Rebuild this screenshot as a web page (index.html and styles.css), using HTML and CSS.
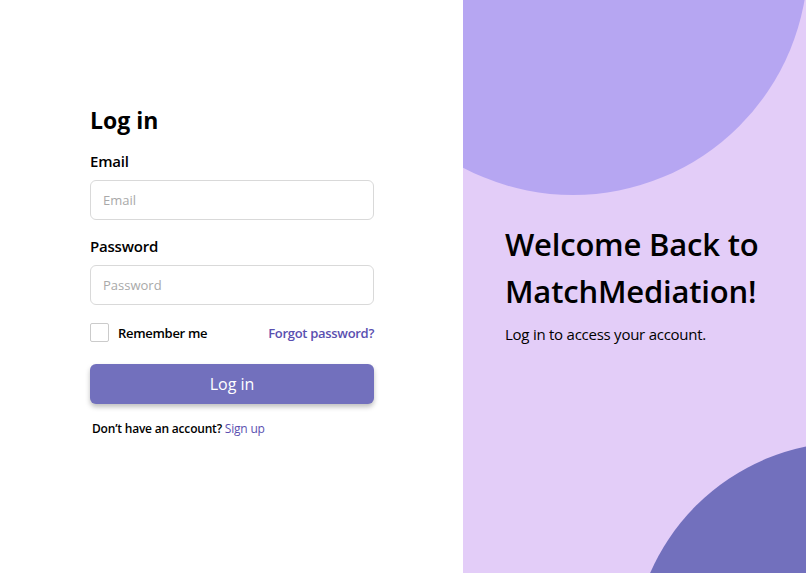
FILE: index.html
```html
<!DOCTYPE html>
<html lang="en">
  <head>
    <meta charset="UTF-8" />
    <meta name="viewport" content="width=device-width, initial-scale=1.0" />
    <title>Log in - MatchMediation</title>
    <link rel="stylesheet" href="styles.css">
  </head>
  <body>
    <div class="login-page">
      <div class="form-side">
        <form class="login-form">
          <h1>Log in</h1>

          <label class="field-label" for="email">Email</label>
          <input class="text-input" id="email" type="email" placeholder="Email" />

          <label class="field-label" for="password">Password</label>
          <input class="text-input" id="password" type="password" placeholder="Password" />

          <div class="form-options">
            <label class="remember">
              <span class="checkbox"></span>
              Remember me
            </label>
            <a class="link" href="#">Forgot password?</a>
          </div>

          <button class="login-button" type="button">Log in</button>

          <p class="signup-text">Don’t have an account? <a class="link" href="#">Sign up</a></p>
        </form>
      </div>

      <div class="welcome-side">
        <div class="circle circle-top"></div>
        <div class="circle circle-bottom"></div>
        <div class="welcome-text">
          <h2>Welcome Back to MatchMediation!</h2>
          <p>Log in to access your account.</p>
        </div>
      </div>
    </div>
  </body>
</html>
```

FILE: styles.css
```css
body {
  margin: 0;
  font-family: "Open Sans", sans-serif;
  color: #000;
  background-color: #fff;
}

.login-page {
  display: flex;
  height: 100vh;
}

.form-side {
  width: 463px;
  flex-shrink: 0;
  padding: 104px 0 0 90px;
  box-sizing: border-box;
}

.login-form {
  width: 284px;
  display: flex;
  flex-direction: column;
}

.login-form h1 {
  margin: 0 0 15px;
  font-size: 23px;
  font-weight: 700;
  line-height: 32px;
}

.field-label {
  font-size: 15px;
  font-weight: 600;
  letter-spacing: -0.2px;
  line-height: 21px;
  margin-bottom: 8px;
}

.text-input {
  height: 40px;
  box-sizing: border-box;
  border: 1px solid #d9d9d9;
  border-radius: 6px;
  padding: 0 12px;
  font-family: "Open Sans", sans-serif;
  font-size: 13px;
  margin-bottom: 16px;
  outline: none;
}

.text-input::placeholder {
  color: #a9a9a9;
}

.form-options {
  display: flex;
  justify-content: space-between;
  align-items: center;
  margin-top: 2px;
  margin-bottom: 22px;
}

.remember {
  display: flex;
  align-items: center;
  gap: 9px;
  font-size: 13px;
  font-weight: 600;
  letter-spacing: -0.3px;
}

.checkbox {
  width: 19px;
  height: 19px;
  border: 1px solid #cbcbcb;
  border-radius: 2px;
  box-sizing: border-box;
}

.link {
  color: #5a50b0;
  font-weight: 600;
  text-decoration: none;
}

.form-options .link {
  font-size: 13px;
  letter-spacing: -0.3px;
}

.login-button {
  height: 40px;
  border: none;
  border-radius: 6px;
  background-color: #7270bd;
  color: #fff;
  font-family: "Open Sans", sans-serif;
  font-size: 16px;
  box-shadow: 0 3px 5px rgba(0, 0, 0, 0.25);
}

.signup-text {
  margin: 16px 0 0 2px;
  font-size: 12px;
  font-weight: 600;
  letter-spacing: -0.2px;
}

.signup-text .link {
  font-weight: 500;
}

.welcome-side {
  flex: 1;
  position: relative;
  overflow: hidden;
  background-color: #e3cdf8;
  display: flex;
  align-items: center;
  padding-left: 42px;
}

.circle {
  position: absolute;
  border-radius: 50%;
}

.circle-top {
  width: 470px;
  height: 470px;
  left: -125px;
  top: -275px;
  background-color: #b6a6f2;
}

.circle-bottom {
  width: 436px;
  height: 436px;
  left: 169px;
  top: 442px;
  background-color: #7270bd;
}

.welcome-text {
  position: relative;
  width: 270px;
  margin-top: -8px;
}

.welcome-text h2 {
  margin: 0 0 9px;
  font-size: 31px;
  font-weight: 600;
  letter-spacing: -0.2px;
  line-height: 47px;
}

.welcome-text p {
  margin: 0;
  font-size: 15px;
  letter-spacing: -0.25px;
}
```
